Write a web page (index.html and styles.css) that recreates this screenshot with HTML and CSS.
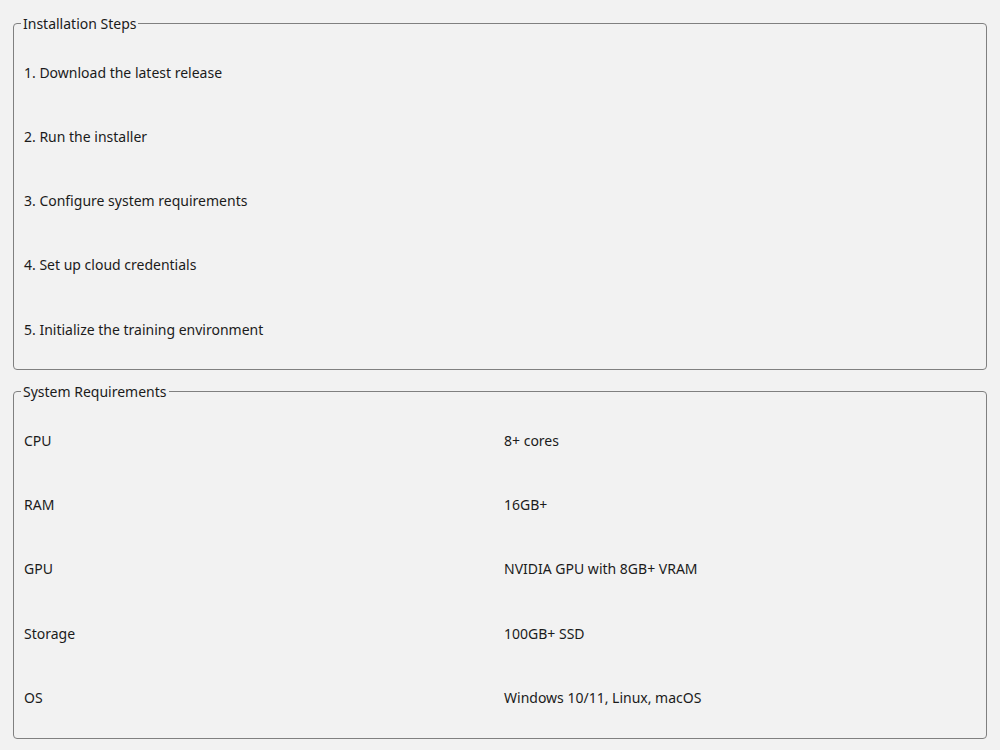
FILE: index.html
```html
<!DOCTYPE html>
<html>
<head>
<meta charset="utf-8">
<link rel="stylesheet" href="styles.css">
</head>
<body>
<div class="page">
  <fieldset class="group">
    <legend class="group-title">Installation Steps</legend>
    <div class="list">
      <div class="row">1. Download the latest release</div>
      <div class="row">2. Run the installer</div>
      <div class="row">3. Configure system requirements</div>
      <div class="row">4. Set up cloud credentials</div>
      <div class="row">5. Initialize the training environment</div>
    </div>
  </fieldset>
  <fieldset class="group">
    <legend class="group-title">System Requirements</legend>
    <div class="table">
      <div class="row">CPU</div><div class="row">8+ cores</div>
      <div class="row">RAM</div><div class="row">16GB+</div>
      <div class="row">GPU</div><div class="row">NVIDIA GPU with 8GB+ VRAM</div>
      <div class="row">Storage</div><div class="row">100GB+ SSD</div>
      <div class="row">OS</div><div class="row">Windows 10/11, Linux, macOS</div>
    </div>
  </fieldset>
</div>
</body>
</html>
```
FILE: styles.css
```css
html, body {
  margin: 0;
  padding: 0;
  background: #f2f2f2;
}
body {
  font-family: "Noto Sans", "Open Sans", sans-serif;
  font-size: 14px;
  color: #1b1b1b;
}
.page {
  padding: 14px 13px 0 13px;
  display: flex;
  flex-direction: column;
  gap: 12px;
}
.group {
  margin: 0;
  border: 1px solid #808080;
  border-radius: 4px;
  padding: 7px 10px 8px 10px;
}
.group-title {
  padding: 0 2px;
  margin-left: -3px;
  line-height: 19px;
}
.list {
  display: grid;
  grid-auto-rows: 64.25px;
}
.table {
  display: grid;
  grid-template-columns: 480px 1fr;
  grid-auto-rows: 64.25px;
}
.row {
  display: flex;
  align-items: center;
  line-height: 19px;
}
```
